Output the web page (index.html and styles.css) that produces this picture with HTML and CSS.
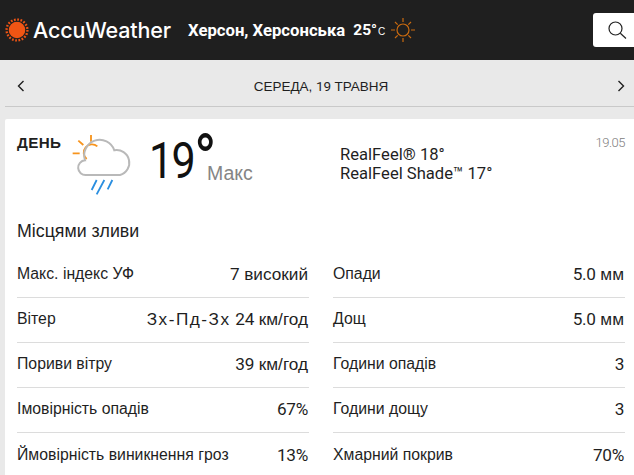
FILE: index.html
```html
<!DOCTYPE html>
<html lang="uk">
<head>
<meta charset="utf-8">
<title>AccuWeather</title>
<link rel="stylesheet" href="styles.css">
</head>
<body>
<header class="topbar">
  <div class="brand">
    <svg class="brand-sun" width="24" height="24" viewBox="0 0 24 24">
      <circle cx="12" cy="12" r="8.300" fill="#f05514"/>
      <circle cx="12" cy="12" r="10.300" fill="none" stroke="#f05514" stroke-width="2.600" stroke-dasharray="1.700 1.530"/>
      <circle cx="12" cy="12" r="9" fill="none" stroke="#1f1f1f" stroke-width="0.700"/>
    </svg>
    <span class="brand-name">AccuWeather</span>
  </div>
  <div class="location">
    <span class="city">Херсон, Херсонська</span>
    <span class="now">25°</span>
    <span class="unit">C</span>
    <svg class="now-icon" width="26" height="26" viewBox="0 0 26 26" fill="none" stroke="#c96a10" stroke-width="1.200">
      <circle cx="13" cy="13" r="6"/>
      <path d="M13 1v4M13 21v4M1 13h4M21 13h4M5 5l2.700 2.700M18.300 18.300L21 21M5 21l2.700-2.700M18.300 7.700L21 5"/>
    </svg>
  </div>
  <div class="search">
    <svg width="20" height="20" viewBox="0 0 20 20" fill="none" stroke="#222" stroke-width="1.200">
      <circle cx="8.500" cy="8.500" r="6.500"/>
      <path d="M13.300 13.300L19 18.500"/>
    </svg>
  </div>
</header>

<nav class="daynav">
  <svg class="chev" width="8" height="12" viewBox="0 0 8 12" fill="none" stroke="#1f1f1f" stroke-width="1.400"><path d="M6.500 1L1.500 6l5 5"/></svg>
  <span class="daynav-title">СЕРЕДА, <span class="n">19</span> ТРАВНЯ</span>
  <svg class="chev" width="8" height="12" viewBox="0 0 8 12" fill="none" stroke="#1f1f1f" stroke-width="1.400"><path d="M1.500 1l5 5-5 5"/></svg>
</nav>

<main class="card">
  <section class="head">
    <span class="daypart">ДЕНЬ</span>
    <svg class="wx" width="80" height="75" viewBox="0 0 240 225" fill="none">
      <path d="M93 30v20M55 47l15 13M38 85h21" stroke="#f7941d" stroke-width="5.500"/>
      <path d="M80 102a22 22 0 0 1 32-38" stroke="#f7941d" stroke-width="5.500"/>
      <path d="M78 150a22 22 0 0 1-3-44 40 40 0 0 1 88-30 38 38 0 0 1 17 74z" stroke="#b9b9b9" stroke-width="6"/>
      <path d="M110 165l-15 30M133 165l-23 43M157 165l-14 28" stroke="#2b8fe0" stroke-width="5.500"/>
    </svg>
    <div class="temp">19<span class="deg">°</span></div>
    <div class="max">Макс</div>
    <div class="realfeel">
      <div>RealFeel® 18°</div>
      <div>RealFeel Shade™ 17°</div>
    </div>
    <div class="date">19.05</div>
  </section>
  <p class="phrase">Місцями зливи</p>
  <section class="grid">
    <div class="col">
      <div class="row"><span>Макс. індекс УФ</span><b><span class="n">7</span> високий</b></div>
      <div class="row"><span>Вітер</span><b><span class="dir">Зх-Пд-Зх</span> <span class="n">24</span> км/год</b></div>
      <div class="row"><span>Пориви вітру</span><b><span class="n">39</span> км/год</b></div>
      <div class="row"><span>Імовірність опадів</span><b class="n">67%</b></div>
      <div class="row"><span>Ймовірність виникнення гроз</span><b class="n">13%</b></div>
    </div>
    <div class="col">
      <div class="row"><span>Опади</span><b><span class="n">5.0</span> мм</b></div>
      <div class="row"><span>Дощ</span><b><span class="n">5.0</span> мм</b></div>
      <div class="row"><span>Години опадів</span><b class="n">3</b></div>
      <div class="row"><span>Години дощу</span><b class="n">3</b></div>
      <div class="row"><span>Хмарний покрив</span><b class="n">70%</b></div>
    </div>
  </section>
</main>
</body>
</html>
```
FILE: styles.css
```css
* { box-sizing: border-box; }
html, body { margin: 0; height: 475px; overflow: hidden; }
body { background: #e9e9e9; font-family: "Liberation Sans", sans-serif; color: #1f1f1f; }
.n { font-family: Roboto, sans-serif; letter-spacing: -0.300px; }

.topbar { height: 60px; background: #1f1f1f; display: flex; align-items: center; padding-left: 5px; color: #fff; }
.brand { display: flex; align-items: center; gap: 4px; width: 183px; }
.brand-name { font-family: Inter, sans-serif; font-size: 21.500px; font-weight: 500; letter-spacing: -0.150px; }
.location { display: flex; align-items: center; flex: 1; }
.city { font-family: Roboto, sans-serif; font-size: 16.700px; font-weight: 700; }
.now { font-family: Roboto, sans-serif; font-size: 15.500px; font-weight: 700; margin-left: 8px; }
.unit { font-size: 10px; margin-left: 1px; margin-top: 3px; }
.now-icon { margin-left: 5px; }
.search { width: 41px; height: 34px; background: #fff; border-radius: 3px 0 0 3px; display: flex; align-items: center; padding-left: 14px; }

.daynav { height: 47px; margin-left: 5px; padding: 5px 9px 0 12px; border-bottom: 1px solid #c9c9c9; display: flex; align-items: center; justify-content: space-between; }
.daynav-title { font-size: 13.500px; }

.card { margin: 12px 0 0 5px; background: #fff; padding: 0 9px 0 12px; height: 360px; border-radius: 2px 0 0 0; }
.head { position: relative; height: 90px; }
.daypart { position: absolute; left: 0; top: 15px; font-size: 15.200px; font-weight: 700; letter-spacing: 0.400px; }
.wx { position: absolute; left: 43px; top: 6px; }
.temp { position: absolute; left: 132px; top: 11px; font-family: Roboto, sans-serif; font-size: 50px; line-height: 62px; letter-spacing: -2px; color: #111; transform: scaleX(0.86); transform-origin: left center; }
.deg { font-size: 70px; line-height: 0; vertical-align: -6px; }
.max { position: absolute; left: 190px; top: 41px; font-size: 19.500px; line-height: 26px; color: #858585; }
.realfeel { position: absolute; left: 323px; top: 26px; font-family: Roboto, sans-serif; font-size: 16.600px; line-height: 19px; }
.date { position: absolute; right: 0; top: 16px; font-family: Roboto, sans-serif; font-size: 13px; font-weight: 300; letter-spacing: -0.500px; color: #808080; }

.phrase { margin: 0; font-size: 17.800px; line-height: 24px; padding-top: 10px; height: 44px; }

.grid { display: grid; grid-template-columns: 292px 292px; column-gap: 24px; }
.row { height: 45px; padding-bottom: 2px; display: flex; align-items: center; justify-content: space-between; border-bottom: 1px solid #dcdcdc; font-size: 15.800px; }
.row:last-child { border-bottom: 0; }
.row b { font-weight: 400; font-size: 17.200px; padding-right: 1px; }
.dir { letter-spacing: 1.500px; }
```
